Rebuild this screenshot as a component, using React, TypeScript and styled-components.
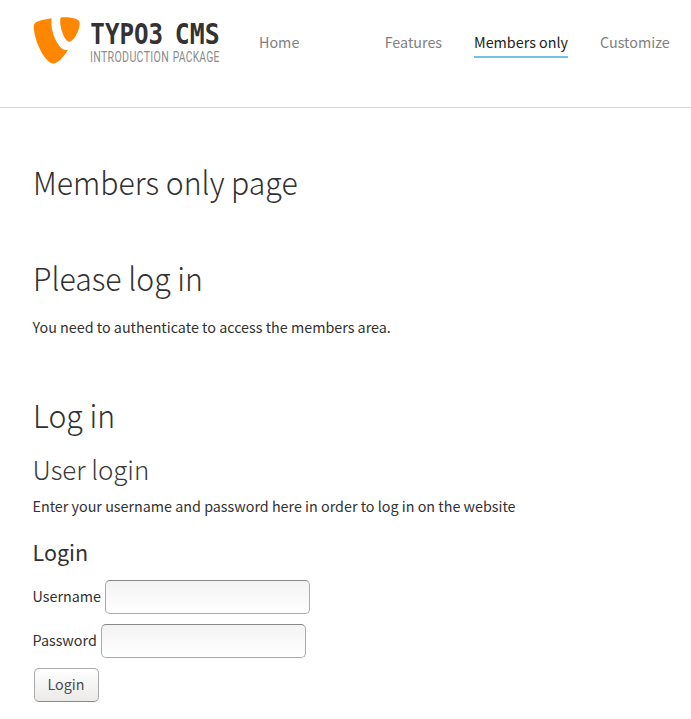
import React from "react";
import styled, { createGlobalStyle, css } from "styled-components";

const Global = createGlobalStyle`
  * { box-sizing: border-box; }
  body {
    margin: 0;
    background: #fff;
    color: #313131;
    font-family: "Noto Sans CJK SC", "Noto Sans", sans-serif;
    font-size: 14.33px;
    line-height: 24px;
    overflow: hidden;
  }
`;

const Header = styled.header`
  display: flex;
  align-items: flex-start;
  height: 108px;
  padding: 12px 0 0 28px;
  border-bottom: 1px solid #d5d5d5;
`;

const LogoLink = styled.a`
  display: block;
  width: 200px;
  height: 60px;
  margin-right: 31px;
`;

const Nav = styled.nav`
  display: flex;
  gap: 32px;
  padding-top: 18px;
`;

const NavItem = styled.a<{ $active?: boolean; $spaced?: boolean }>`
  height: 28px;
  white-space: nowrap;
  color: #808080;
  ${(p) => p.$spaced && css`margin-right: 53.3px;`}
  ${(p) => p.$active && css`color: #222; border-bottom: 2px solid #73c0e8;`}
`;

const Main = styled.main`
  padding: 51px 32px 0 32.5px;
`;

const Title = styled.h1<{ $gap: number }>`
  margin: 0 0 ${(p) => p.$gap}px;
  font-size: 32px;
  font-weight: 300;
  line-height: 44px;
  transform: scaleX(0.943);
  transform-origin: left center;
`;

const Subtitle = styled.h2`
  margin: 0 0 7px;
  color: #3a3a3a;
  font-size: 25.9px;
  font-weight: 300;
  letter-spacing: -0.05px;
  line-height: 36px;
`;

const Text = styled.p<{ $gap: number }>`
  margin: 0 0 ${(p) => p.$gap}px;
`;

const Legend = styled.h3`
  margin: 0 0 14px;
  font-size: 21.5px;
  font-weight: 400;
  line-height: 28px;
`;

const Field = styled.label`
  display: flex;
  align-items: center;
  gap: 4px;
  height: 34px;
  margin-bottom: 10px;
  line-height: 22px;
`;

const Caption = styled.span`
  padding-bottom: 2px;
`;

const Input = styled.input`
  width: 205px;
  height: 34px;
  padding: 0 12px;
  border: 1px solid #aaa;
  border-top-color: #888;
  border-radius: 5px;
  background: linear-gradient(#f3f3f3, #fff);
  font: inherit;
  outline: none;
`;

const Submit = styled.button`
  display: block;
  width: 65px;
  height: 34px;
  margin-left: 1.5px;
  padding: 0 1px 2px 0;
  border: 1px solid #aaa;
  border-bottom-color: #888;
  border-radius: 5px;
  background: linear-gradient(#fff, #ebeae9);
  color: #4d4d4d;
  font: inherit;
`;

const Logo = () => (
  <svg width="200" height="60" viewBox="28 12 200 60" role="img" aria-label="TYPO3 CMS Introduction Package">
    <path fill="#ff8700" d="M51.8 18.2C44 19.2 36.6 21 34.8 23.2C33.9 24.4 33.7 26 33.8 28C34.5 41.5 45.2 63.5 53.5 63.5C57.5 63.5 64.2 56.5 68 49.7C67.2 49.9 66.5 50 65.8 50C59 50 51.4 34 51.4 23C51.4 20.5 51.5 19.2 51.8 18.2Z" />
    <path fill="#ff8700" d="M60.8 17.4C69 17 79.7 18 79.7 23C79.7 30.5 73.5 41.7 69.3 41.7C65 41.7 60.2 29.5 60.2 21.5C60.2 18.5 60.5 17.7 60.8 17.4Z" />
    <g fontFamily="'DejaVu Sans Mono', monospace" fontWeight="700" fontSize="28.5" fill="#333">
      <text transform="translate(90.3 43.8) scale(.85 1)">TYPO3</text>
      <text transform="translate(174.8 43.8) scale(.87 1)">CMS</text>
    </g>
    <g fontFamily="Roboto, sans-serif" fontWeight="400" fontSize="15" fill="#8c8c8c">
      <text transform="translate(90 62.3) scale(.71 1)" textLength="111" lengthAdjust="spacing">INTRODUCTION</text>
      <text transform="translate(172.8 62.3) scale(.69 1)" textLength="67.5" lengthAdjust="spacing">PACKAGE</text>
    </g>
  </svg>
);

export default function App() {
  return (
    <>
      <Global />
      <Header>
        <LogoLink><Logo /></LogoLink>
        <Nav>
          <NavItem $spaced>Home</NavItem>
          <NavItem>Features</NavItem>
          <NavItem $active>Members only</NavItem>
          <NavItem>Customize</NavItem>
        </Nav>
      </Header>
      <Main>
        <Title $gap={52}>Members only page</Title>
        <Title $gap={16}>Please log in</Title>
        <Text $gap={53}>You need to authenticate to access the members area.</Text>
        <Title $gap={15}>Log in</Title>
        <Subtitle>User login</Subtitle>
        <Text $gap={20}>Enter your username and password here in order to log in on the website</Text>
        <Legend>Login</Legend>
        <Field><Caption>Username</Caption><Input type="text" /></Field>
        <Field><Caption>Password</Caption><Input type="password" /></Field>
        <Submit type="button">Login</Submit>
      </Main>
    </>
  );
}
